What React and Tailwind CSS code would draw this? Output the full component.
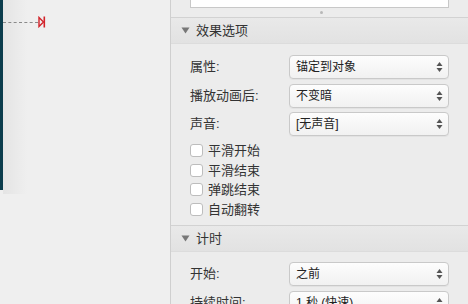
const font = { fontFamily: '"Liberation Sans", "Noto Sans CJK SC", sans-serif' };

function Arrows() {
  return (
    <svg width="7" height="12" viewBox="0 0 7 12" className="shrink-0">
      <path d="M3.5 1 L6.5 5 L0.5 5 Z" fill="#555" />
      <path d="M3.5 11 L6.5 7 L0.5 7 Z" fill="#555" />
    </svg>
  );
}

function SelectRow({ label, value }) {
  return (
    <div className="flex items-center h-[24px] shrink-0">
      <div className="w-[99px] text-[13px] text-[#333]">{label}</div>
      <div className="flex-1 h-[24px] flex items-center justify-between pl-[6px] pr-[5px] rounded-[4px] border border-[#c9c9c9] bg-gradient-to-b from-[#fdfdfd] to-[#f1f1f1] shadow-[0_1px_0_rgba(0,0,0,0.04)]">
        <span className="text-[12px] text-[#222]">{value}</span>
        <Arrows />
      </div>
    </div>
  );
}

function Check({ label }) {
  return (
    <div className="flex items-center h-[19.5px] gap-[5px] shrink-0">
      <div className="w-[13px] h-[13px] rounded-[3px] border border-[#bdbdbd] bg-white" />
      <span className="text-[13px] text-[#333]">{label}</span>
    </div>
  );
}

function Header({ title }) {
  return (
    <div className="h-[27px] shrink-0 flex items-center pl-[10px] gap-[6px] border-t border-[#d2d2d2] border-b border-b-[#dcdcdc] bg-gradient-to-b from-[#e9e9e9] to-[#e2e2e2]">
      <svg width="9" height="7" viewBox="0 0 9 7">
        <path d="M0.5 0.5 L8.5 0.5 L4.5 6.5 Z" fill="#777" />
      </svg>
      <span className="text-[13px] text-[#333]">{title}</span>
    </div>
  );
}

export default function App() {
  return (
    <div className="w-[468px] h-[304px] flex overflow-hidden bg-[#efefef]" style={font}>
      {/* 画布 */}
      <div className="relative w-[170px] h-full bg-[#efefef]">
        <div className="absolute left-0 top-0 w-[3px] h-[190px] bg-[#0b3c4c]" />
        <div className="absolute left-[3px] top-0 w-[24px] h-[194px] bg-gradient-to-r from-[#e4e4e4] to-[#efefef]" />
        <div className="absolute left-[3px] top-[22px] w-[35px] border-t border-dashed border-[#8a8a8a]" />
        <svg className="absolute left-[38px] top-[16px]" width="8" height="12" viewBox="0 0 8 12">
          <path d="M1 1.5 L5.5 6 L1 10.5 Z" fill="none" stroke="#d2232a" strokeWidth="1.4" />
          <path d="M6.3 0.5 L6.3 11.5" stroke="#d2232a" strokeWidth="1.6" />
        </svg>
      </div>

      {/* 检查器 */}
      <div className="flex-1 h-full overflow-hidden border-l border-[#cfcfcf] bg-[#ececec] flex flex-col">
        <div className="h-[17px] shrink-0 relative">
          <div className="mx-[19px] h-[8px] bg-white border border-t-0 border-[#c8c8c8]" />
          <div className="absolute left-[149px] top-[11px] w-[3px] h-[3px] rounded-full bg-[#b8b8b8]" />
        </div>
        <Header title="效果选项" />
        <div className="px-[19px] pt-[11px] shrink-0 flex flex-col gap-[4.5px]">
          <SelectRow label="属性:" value="锚定到对象" />
          <SelectRow label="播放动画后:" value="不变暗" />
          <SelectRow label="声音:" value="[无声音]" />
        </div>
        <div className="px-[19px] pt-[5px] pb-[6px] shrink-0 flex flex-col">
          <Check label="平滑开始" />
          <Check label="平滑结束" />
          <Check label="弹跳结束" />
          <Check label="自动翻转" />
        </div>
        <Header title="计时" />
        <div className="px-[19px] pt-[10px] shrink-0 flex flex-col gap-[4.5px]">
          <SelectRow label="开始:" value="之前" />
          <SelectRow label="持续时间:" value="1 秒 (快速)" />
        </div>
      </div>
    </div>
  );
}
